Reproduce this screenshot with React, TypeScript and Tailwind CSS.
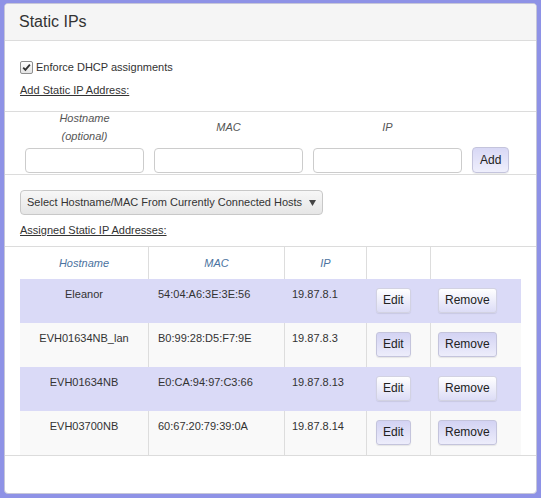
const rows = [
  { host: 'Eleanor', mac: '54:04:A6:3E:3E:56', ip: '19.87.8.1' },
  { host: 'EVH01634NB_lan', mac: 'B0:99:28:D5:F7:9E', ip: '19.87.8.3' },
  { host: 'EVH01634NB', mac: 'E0:CA:94:97:C3:66', ip: '19.87.8.13' },
  { host: 'EVH03700NB', mac: '60:67:20:79:39:0A', ip: '19.87.8.14' },
];

function Btn({ children, alt }: { children: React.ReactNode; alt?: boolean }) {
  return (
    <button
      className={`h-[25px] px-[6px] border rounded-[3px] text-[12px] leading-[15px] text-[#222] shadow-[0_1px_1px_rgba(0,0,0,0.08)] ${
        alt
          ? 'bg-linear-to-b from-[#d3d3f3] to-[#ededfb] border-[#c4c4dc]'
          : 'bg-linear-to-b from-white to-[#dcdcf6] border-[#d2d2e2]'
      }`}
    >
      {children}
    </button>
  );
}

export default function App() {
  return (
    <div className="w-[541px] h-[498px] bg-[#8e92e6] pt-[3px] px-[4px] pb-[4px] font-['Liberation_Sans',Arial,sans-serif] text-[#333]">
      <div className="h-full bg-white border border-[#c6c6d8] rounded-[4px] flex flex-col overflow-hidden">
        {/* Panel heading */}
        <div className="h-[37px] shrink-0 bg-[#f5f5f5] border-b border-[#dcdcdc] flex items-center pl-[14px] text-[16px] leading-[20px]">
          Static IPs
        </div>

        {/* Options */}
        <div className="h-[70px] shrink-0 pl-[15px] pt-[18px] flex flex-col gap-[7px] text-[11px] leading-[16px]">
          <label className="flex items-center">
            <span className="w-[13px] h-[13px] mr-[3px] border border-[#8f8f8f] rounded-[2px] bg-linear-to-b from-white to-[#e4e4e4] flex items-center justify-center">
              <svg width="9" height="9" viewBox="0 0 9 9">
                <path d="M1.2 4.6 L3.4 6.9 L7.9 1.6" fill="none" stroke="#333" strokeWidth="1.8" />
              </svg>
            </span>
            Enforce DHCP assignments
          </label>
          <div className="underline">Add Static IP Address:</div>
        </div>

        {/* Add form */}
        <div className="h-[63px] shrink-0 border-t border-[#dcdcdc] pl-[20px] flex items-end gap-[10px] pb-[1px] text-[11px]">
          <div className="flex flex-col items-center">
            <div className="flex flex-col items-center italic text-[#555] leading-[18px] -mt-[3px] mb-[3px]">
              <span>Hostname</span>
              <span>(optional)</span>
            </div>
            <input className="w-[119px] h-[25px] border border-[#ccc] rounded-[4px] outline-none" />
          </div>
          <div className="flex flex-col items-center">
            <div className="h-[36px] flex items-center italic text-[#555] leading-[18px] -mt-[3px] mb-[3px]">MAC</div>
            <input className="w-[149px] h-[25px] border border-[#ccc] rounded-[4px] outline-none" />
          </div>
          <div className="flex flex-col items-center">
            <div className="h-[36px] flex items-center italic text-[#555] leading-[18px] -mt-[3px] mb-[3px]">IP</div>
            <input className="w-[149px] h-[25px] border border-[#ccc] rounded-[4px] outline-none" />
          </div>
          <button className="h-[26px] px-[7px] border border-[#c4c4dc] rounded-[4px] text-[12px] text-[#222] bg-linear-to-b from-[#d8d8f5] to-[#efeffc] shadow-[0_1px_1px_rgba(0,0,0,0.08)]">
            Add
          </button>
        </div>

        {/* Select + assigned label */}
        <div className="h-[72px] shrink-0 border-t border-[#dcdcdc] pl-[15px] pt-[15px] flex flex-col text-[11px]">
          <div className="w-[303px] h-[25px] border border-[#c8c8c8] rounded-[4px] bg-linear-to-b from-[#f7f7f7] to-[#e6e6e6] flex items-center justify-between pl-[6px] pr-[6px] leading-[15px]">
            <span>Select Hostname/MAC From Currently Connected Hosts</span>
            <svg width="7" height="6" viewBox="0 0 7 6">
              <polygon points="0,0 7,0 3.5,6" fill="#444" />
            </svg>
          </div>
          <div className="mt-[7px] leading-[16px] underline">Assigned Static IP Addresses:</div>
        </div>

        {/* Table */}
        <div className="shrink-0 border-t border-b border-[#dcdcdc] px-[15px] text-[11px] leading-[15px]">
          <div className="grid grid-cols-[128px_136px_82px_64px_91px] h-[32px] italic text-[#4b73a0]">
            <div className="flex items-center justify-center">Hostname</div>
            <div className="flex items-center justify-center border-l border-[#dddddd]">MAC</div>
            <div className="flex items-center justify-center border-l border-[#dddddd]">IP</div>
            <div className="border-l border-[#dddddd]" />
            <div className="border-l border-[#dddddd]" />
          </div>
          {rows.map((r, i) => {
            const odd = i % 2 === 0;
            const bl = odd ? 'border-l border-[#dadaf7]' : 'border-l border-[#dddddd]';
            return (
              <div
                key={r.mac}
                className={`grid grid-cols-[128px_136px_82px_64px_91px] h-[44px] ${odd ? 'bg-[#dadaf7]' : 'bg-[#f9f9f9]'}`}
              >
                <div className="pt-[8px] text-center">{r.host}</div>
                <div className={`pt-[8px] pl-[9px] ${bl}`}>{r.mac}</div>
                <div className={`pt-[8px] pl-[7px] ${bl}`}>{r.ip}</div>
                <div className={`pt-[9px] pl-[9px] ${bl}`}>
                  <Btn alt={!odd}>Edit</Btn>
                </div>
                <div className={`pt-[9px] pl-[7px] ${bl}`}>
                  <Btn alt={!odd}>Remove</Btn>
                </div>
              </div>
            );
          })}
        </div>

        <div className="flex-1" />
      </div>
    </div>
  );
}
